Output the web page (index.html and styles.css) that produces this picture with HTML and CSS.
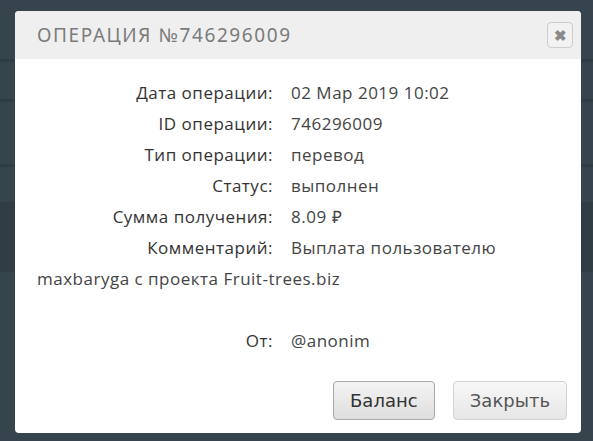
FILE: index.html
```html
<!DOCTYPE html>
<html>
<head>
<meta charset="utf-8">
<title>Операция</title>
<link rel="stylesheet" href="styles.css">
</head>
<body>
<div class="backdrop">
  <div class="bg-row bg-top"></div>
  <div class="bg-row bg-a"></div>
  <div class="bg-row bg-b"></div>
  <div class="bg-row bg-c"></div>
  <div class="bg-row bg-dark"></div>
  <div class="bg-row bg-rest"></div>
</div>

<div class="dialog">
  <div class="dialog-head">
    <span class="dialog-title">Операция №746296009</span>
    <span class="dialog-close">&#10006;</span>
  </div>
  <div class="dialog-body">
    <div class="info">
      <span class="lbl">Дата операции:</span><span class="val">02 Мар 2019 10:02</span><br>
      <span class="lbl">ID операции:</span><span class="val">746296009</span><br>
      <span class="lbl">Тип операции:</span><span class="val">перевод</span><br>
      <span class="lbl">Статус:</span><span class="val">выполнен</span><br>
      <span class="lbl">Сумма получения:</span><span class="val">8.09 &#8381;</span><br>
      <span class="lbl">Комментарий:</span><span class="val">Выплата пользователю maxbaryga с проекта Fruit-trees.biz</span><br>
      <br>
      <span class="lbl">От:</span><span class="val">@anonim</span>
    </div>
    <div class="actions">
      <button class="btn">Баланс</button>
      <button class="btn btn-close">Закрыть</button>
    </div>
  </div>
</div>
</body>
</html>
```

FILE: styles.css
```css
body {
  margin: 0;
  background-color: #36454d;
  font-family: "Open Sans", sans-serif;
  overflow: hidden;
}

.backdrop {
  display: flex;
  flex-direction: column;
  height: 441px;
}

.bg-row {
  border-bottom: 3px solid #2f3c43;
}

.bg-top { height: 59px; }
.bg-a { height: 37px; }
.bg-b { height: 62px; }
.bg-c { height: 35px; border-bottom: none; }
.bg-dark { height: 70px; background-color: #313d44; border-bottom: none; }
.bg-rest { flex: 1; border-bottom: none; }

.dialog {
  position: absolute;
  left: 15px;
  top: 11px;
  width: 566px;
  height: 422px;
  background: #fff;
  border-radius: 4px;
  overflow: hidden;
  display: flex;
  flex-direction: column;
}

.dialog-head {
  height: 48px;
  background: #efefef;
  display: flex;
  align-items: center;
  justify-content: space-between;
  padding: 0 8px 0 22px;
}

.dialog-title {
  font-family: "Noto Sans", sans-serif;
  text-transform: uppercase;
  font-size: 19px;
  letter-spacing: 1.6px;
  color: #7b7b7b;
}

.dialog-close {
  width: 24px;
  height: 24px;
  border: 1px solid #cdcdcd;
  border-radius: 4px;
  background: #f2f2f2;
  color: #8a8a8a;
  font-size: 15px;
  font-weight: bold;
  line-height: 24px;
  text-align: center;
}

.dialog-body {
  flex: 1;
  display: flex;
  flex-direction: column;
  padding: 18px 14px 13px 22px;
}

.info {
  flex: 1;
  font-size: 17px;
  letter-spacing: 0.5px;
  line-height: 31px;
  color: #444;
}

.lbl {
  display: inline-block;
  width: 236px;
  text-align: right;
  color: #333;
  margin-right: 18px;
}

.actions {
  display: flex;
  justify-content: flex-end;
  gap: 18px;
}

.btn {
  height: 39px;
  padding: 0 16px;
  min-width: 102px;
  font-family: "DejaVu Sans", sans-serif;
  font-size: 18px;
  color: #333;
  border: 1px solid #a9a9a9;
  border-radius: 4px;
  background: linear-gradient(#f4f4f4, #dedede);
}

.btn-close {
  min-width: 112px;
  color: #555;
  border-color: #d2d2d2;
  background: linear-gradient(#f8f8f8, #e6e6e6);
}
```
